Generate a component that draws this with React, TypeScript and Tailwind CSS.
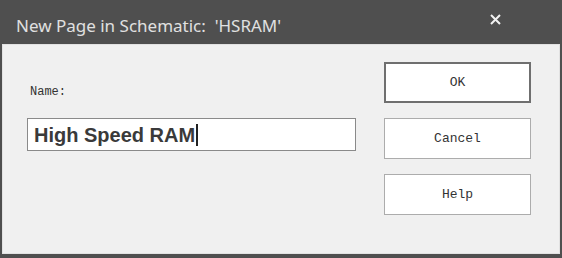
const App = () => {
  return (
    <div className="w-[562px] h-[258px] bg-[#4f4f4f] flex flex-col overflow-hidden">
      {/* Title bar */}
      <div className="h-[44px] flex items-center justify-between pl-[16px] pr-[61px] pt-[6px]">
        <span className="text-[#e0e0e0] text-[17px] font-['Noto_Sans',sans-serif] leading-none">
          New Page in Schematic:&nbsp; 'HSRAM'
        </span>
        <svg width="11" height="11" viewBox="0 0 11 11" className="mb-[12px]">
          <path d="M1 1 L10 10 M10 1 L1 10" stroke="#f2f2f2" strokeWidth="2" />
        </svg>
      </div>

      {/* Body */}
      <div className="mx-[2px] mb-[4px] flex-1 bg-[#f0f0f0] border border-[#e2e2e2] flex">
        <div className="pl-[24px] pt-[41px] w-[381px]">
          <div className="text-[12px] text-[#333] font-['Liberation_Mono',monospace] leading-none mb-[20px] pl-[3px]">
            Name:
          </div>
          <div className="w-[329px] h-[33px] bg-white border border-[#8a8a8a] flex items-center pl-[6px]">
            <span className="text-[20px] font-bold text-[#3a3a3a] font-['Liberation_Sans',sans-serif] leading-none">
              High Speed RAM
            </span>
            <span className="w-[2px] h-[22px] bg-[#222] ml-[1px]" />
          </div>
        </div>
        <div className="pt-[17px] flex flex-col gap-[15px]">
          <button className="w-[147px] h-[41px] bg-white border-2 border-[#6f6f6f] text-[13px] text-[#333] font-['Liberation_Mono',monospace]">
            OK
          </button>
          <button className="w-[147px] h-[41px] bg-white border border-[#acacac] text-[13px] text-[#333] font-['Liberation_Mono',monospace]">
            Cancel
          </button>
          <button className="w-[147px] h-[41px] bg-white border border-[#acacac] text-[13px] text-[#333] font-['Liberation_Mono',monospace]">
            Help
          </button>
        </div>
      </div>
    </div>
  );
};

export default App;
